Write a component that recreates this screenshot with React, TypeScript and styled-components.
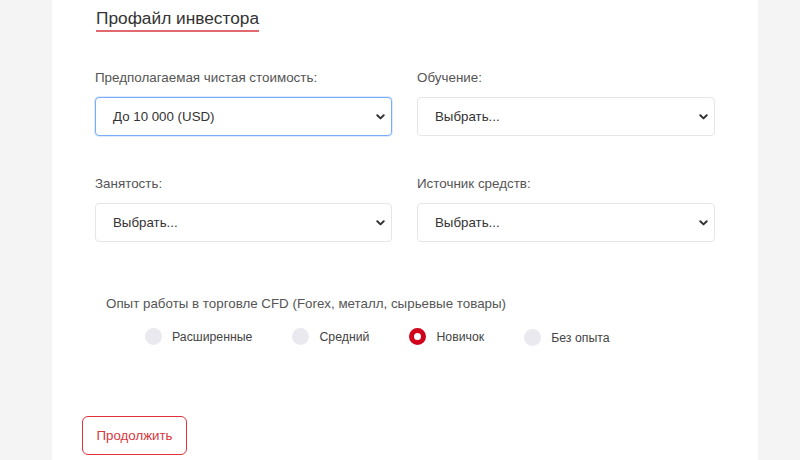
import React from "react";
import styled, { createGlobalStyle } from "styled-components";

const Global = createGlobalStyle`
  html, body { margin: 0; padding: 0; }
  body {
    background: #f4f4f4;
    font-family: "Liberation Sans", Arial, sans-serif;
    color: #333;
  }
`;

const Page = styled.div`
  display: flex;
  justify-content: flex-start;
  height: 460px;
  overflow: hidden;
  padding-left: 52px;
`;

const Panel = styled.div`
  width: 706px;
  background: #ffffff;
  padding: 8px 0 0 0;
  box-sizing: border-box;
  display: flex;
  flex-direction: column;
`;

const Content = styled.div`
  padding-left: 43px;
  padding-right: 42px;
  display: flex;
  flex-direction: column;
`;

const Title = styled.h2`
  align-self: flex-start;
  margin: 0 0 0 1px;
  font-size: 17.3px;
  line-height: 20px;
  font-weight: 400;
  color: #333;
  padding-bottom: 2px;
  border-bottom: 2px solid #e16a70;
`;

const Grid = styled.div`
  display: grid;
  grid-template-columns: 297px 298px;
  column-gap: 25px;
  row-gap: 40px;
  margin-top: 38px;
`;

const Field = styled.div`
  display: flex;
  flex-direction: column;
`;

const Label = styled.label`
  font-size: 13.4px;
  line-height: 16px;
  color: #555;
  margin-bottom: 11px;
`;

const Select = styled.div<{ $focused?: boolean }>`
  height: 39px;
  box-sizing: border-box;
  border: 1px solid ${(p) => (p.$focused ? "#78aef7" : "#e4e6ea")};
  box-shadow: ${(p) => (p.$focused ? "0 0 0 1px rgba(120,174,247,0.25)" : "none")};
  border-radius: 4px;
  display: flex;
  align-items: center;
  justify-content: space-between;
  padding: 0 6px 0 17px;
  font-size: 13.3px;
  color: #333;
  background: #fff;
`;

const Chevron = () => (
  <svg width="9" height="6" viewBox="0 0 9 6">
    <path d="M1.3 1.3 L4.5 4.4 L7.7 1.3" fill="none" stroke="#333" strokeWidth="2" strokeLinecap="round" strokeLinejoin="round" />
  </svg>
);

const Experience = styled.div`
  margin-top: 54px;
  padding-left: 11px;
  display: flex;
  flex-direction: column;
`;

const GroupTitle = styled.div`
  font-size: 13.35px;
  line-height: 16px;
  color: #555;
`;

const Options = styled.div`
  display: flex;
  gap: 40px;
  margin-top: 15px;
  padding-left: 39px;
`;

const Option = styled.div<{ $offset?: number }>`
  display: flex;
  align-items: center;
  gap: 10px;
  font-size: 12.3px;
  color: #444;
  margin-top: ${(p) => p.$offset ?? 0}px;
`;

const Radio = styled.span<{ $checked?: boolean }>`
  width: 17px;
  height: 17px;
  border-radius: 50%;
  box-sizing: border-box;
  background: ${(p) => (p.$checked ? "#fff" : "#e9e9ef")};
  border: ${(p) => (p.$checked ? "5.5px solid #d0021b" : "none")};
`;

const Footer = styled.div`
  margin-top: 70px;
  padding-left: 30px;
`;

const Button = styled.button`
  width: 105px;
  height: 39px;
  border: 1px solid #e0323b;
  border-radius: 6px;
  background: #fff;
  color: #d9363e;
  font-family: "Liberation Sans", Arial, sans-serif;
  font-size: 13.3px;
  cursor: pointer;
`;

const options = [
  { label: "Расширенные", checked: false, offset: 0 },
  { label: "Средний", checked: false, offset: 0 },
  { label: "Новичок", checked: true, offset: 0 },
  { label: "Без опыта", checked: false, offset: 2 },
];

export default function App() {
  return (
    <>
      <Global />
      <Page>
        <Panel>
          <Content>
            <Title>Профайл инвестора</Title>
            <Grid>
              <Field>
                <Label>Предполагаемая чистая стоимость:</Label>
                <Select $focused>
                  До 10 000 (USD)
                  <Chevron />
                </Select>
              </Field>
              <Field>
                <Label>Обучение:</Label>
                <Select>
                  Выбрать...
                  <Chevron />
                </Select>
              </Field>
              <Field>
                <Label>Занятость:</Label>
                <Select>
                  Выбрать...
                  <Chevron />
                </Select>
              </Field>
              <Field>
                <Label>Источник средств:</Label>
                <Select>
                  Выбрать...
                  <Chevron />
                </Select>
              </Field>
            </Grid>
            <Experience>
              <GroupTitle>Опыт работы в торговле CFD (Forex, металл, сырьевые товары)</GroupTitle>
              <Options>
                {options.map((o) => (
                  <Option key={o.label} $offset={o.offset}>
                    <Radio $checked={o.checked} />
                    {o.label}
                  </Option>
                ))}
              </Options>
            </Experience>
          </Content>
          <Footer>
            <Button>Продолжить</Button>
          </Footer>
        </Panel>
      </Page>
    </>
  );
}
